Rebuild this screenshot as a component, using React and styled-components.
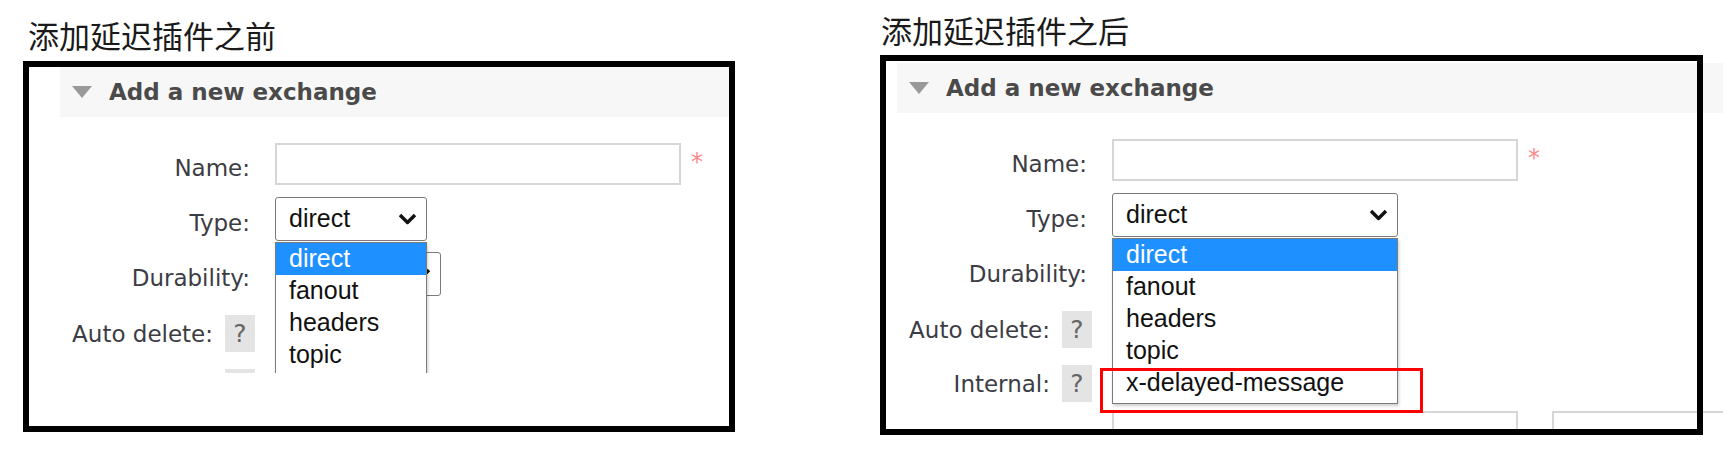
import React from 'react';
import styled, { createGlobalStyle } from 'styled-components';

const GlobalStyle = createGlobalStyle`
  html, body {
    margin: 0;
    padding: 0;
    background: #fff;
  }
  body {
    font-family: "DejaVu Sans", Verdana, sans-serif;
  }
`;

const Page = styled.div`
  display: flex;
  align-items: flex-start;
  gap: 145px;
  width: 1736px;
  height: 451px;
  padding-left: 23px;
  box-sizing: border-box;
  overflow: hidden;
`;

const Panel = styled.section`
  display: flex;
  flex-direction: column;
  padding-top: ${({ $top }) => $top}px;
`;

const Title = styled.h2`
  margin: 0 0 ${({ $gap }) => $gap}px ${({ $indent }) => $indent}px;
  font-family: "Noto Sans CJK SC", sans-serif;
  font-weight: 400;
  font-size: 31px;
  line-height: 36px;
  color: #1a1a1a;
`;

// the black frame is drawn over the pasted screenshot, so it sits in ::after
const Frame = styled.div`
  position: relative;
  width: ${({ $w }) => $w}px;
  height: ${({ $h }) => $h}px;
  padding: 6px;
  box-sizing: border-box;

  &::after {
    content: '';
    position: absolute;
    inset: 0;
    border: 6px solid #000;
    pointer-events: none;
    z-index: 5;
  }
`;

const Shot = styled.div`
  position: relative;
  margin: ${({ $y }) => $y}px 0 0 ${({ $x }) => $x}px;
  width: ${({ $w }) => $w}px;
  height: ${({ $h }) => $h}px;
  overflow: hidden;
  background: #fff;
  color: #3c3c44;
`;

const SectionHeader = styled.div`
  display: flex;
  align-items: center;
  gap: 17px;
  height: 50px;
  padding-left: 12px;
  background: #f7f7f7;
  font-weight: 700;
  font-size: 23px;
  color: #4a4a4a;
`;

const Caret = styled.span`
  width: 0;
  height: 0;
  border-left: 10.5px solid transparent;
  border-right: 10.5px solid transparent;
  border-top: 12px solid #999;
`;

const Form = styled.div`
  padding-top: 19px;
`;

const Row = styled.div`
  display: grid;
  grid-template-columns: 195px auto;
  column-gap: 20px;
  align-items: center;
  height: ${({ $h }) => $h}px;
`;

const Label = styled.div`
  display: flex;
  justify-content: flex-end;
  align-items: center;
  gap: 12px;
  padding-right: ${({ $help }) => ($help ? 0 : 5)}px;
  padding-top: ${({ $help }) => ($help ? 0 : 8)}px;
  font-size: 23px;
  color: #3c3c44;
  white-space: nowrap;
`;

const Help = styled.span`
  display: flex;
  align-items: center;
  justify-content: center;
  width: 30px;
  height: 37px;
  background: #e4e4e4;
  color: #666;
  font-size: 25px;
`;

const Field = styled.div`
  display: flex;
  align-items: center;
  gap: 10px;
`;

const TextInput = styled.div`
  width: 406px;
  height: 42px;
  flex: none;
  box-sizing: border-box;
  border: 2px solid #d6d6d6;
  background: #fff;
`;

const Required = styled.span`
  align-self: flex-start;
  margin-top: 7px;
  color: #ff8a8a;
  font-size: 24px;
  line-height: 24px;
`;

const Equals = styled.span`
  width: 14px;
  flex: none;
  margin-top: 14px;
  text-align: center;
  font-size: 24px;
  font-weight: 700;
  color: #222;
`;

const SelectWrap = styled.div`
  position: relative;
  width: ${({ $w }) => $w}px;
  z-index: ${({ $open }) => ($open ? 3 : 1)};
`;

const SelectBox = styled.div`
  display: flex;
  align-items: center;
  justify-content: space-between;
  height: 44px;
  padding: 0 9px 0 13px;
  box-sizing: border-box;
  border: 1.5px solid #7a7a7a;
  border-radius: 3px;
  background: #fff;
  font-family: "Liberation Sans", Arial, sans-serif;
  font-size: 25px;
  color: #111;
`;

const OptionList = styled.ul`
  position: absolute;
  top: calc(100% + 1px);
  left: 0;
  right: 0;
  margin: 0;
  padding: 0 0 4px;
  list-style: none;
  border: 1.5px solid #7a7a7a;
  background: #fff;
  box-shadow: 1px 2px 3px rgba(0, 0, 0, 0.2);
`;

const Option = styled.li`
  height: 32px;
  line-height: 31px;
  padding-left: 13px;
  font-family: "Liberation Sans", Arial, sans-serif;
  font-size: 25px;
  background: ${({ $active }) => ($active ? '#1e90ff' : 'transparent')};
  color: ${({ $active }) => ($active ? '#fff' : '#111')};
`;

const Marker = styled.div`
  position: absolute;
  left: 203px;
  top: 305px;
  width: 323px;
  height: 45px;
  box-sizing: border-box;
  border: 3px solid #f00;
  z-index: 4;
`;

const Chevron = () => (
  <svg width="19" height="12" viewBox="0 0 19 12">
    <polyline points="2,2 9.5,9.5 17,2" fill="none" stroke="#111" strokeWidth="3.4" strokeLinejoin="round" />
  </svg>
);

const Select = ({ width, value, options, open }) => (
  <SelectWrap $w={width} $open={open}>
    <SelectBox>
      <span>{value}</span>
      <Chevron />
    </SelectBox>
    {open && (
      <OptionList>
        {options.map((opt, i) => (
          <Option key={opt} $active={i === 0}>{opt}</Option>
        ))}
      </OptionList>
    )}
  </SelectWrap>
);

const baseTypes = ['direct', 'fanout', 'headers', 'topic'];

const panels = [
  {
    title: '添加延迟插件之前',
    top: 17,
    gap: 8,
    indent: 5,
    frame: { w: 712, h: 371 },
    shot: { x: 31, y: 0, w: 669, h: 306 },
    typeWidth: 152,
    types: baseTypes,
    marked: false,
  },
  {
    title: '添加延迟插件之后',
    top: 12,
    gap: 7,
    indent: 1,
    frame: { w: 823, h: 380 },
    shot: { x: 11, y: 2, w: 826, h: 372 },
    typeWidth: 286,
    types: [...baseTypes, 'x-delayed-message'],
    marked: true,
  },
];

const ExchangeForm = ({ panel }) => (
  <Panel $top={panel.top}>
    <Title $gap={panel.gap} $indent={panel.indent}>{panel.title}</Title>
    <Frame $w={panel.frame.w} $h={panel.frame.h}>
      <Shot $x={panel.shot.x} $y={panel.shot.y} $w={panel.shot.w} $h={panel.shot.h}>
        <SectionHeader>
          <Caret />
          Add a new exchange
        </SectionHeader>
        <Form>
          <Row $h={55}>
            <Label>Name:</Label>
            <Field>
              <TextInput />
              <Required>*</Required>
            </Field>
          </Row>
          <Row $h={55}>
            <Label>Type:</Label>
            <Field>
              <Select width={panel.typeWidth} value="direct" options={panel.types} open />
            </Field>
          </Row>
          <Row $h={55}>
            <Label>Durability:</Label>
            <Field>
              <Select width={166} value="Durable" />
            </Field>
          </Row>
          <Row $h={65}>
            <Label $help>
              Auto delete:
              <Help>?</Help>
            </Label>
            <Field />
          </Row>
          <Row $h={43}>
            <Label $help>
              Internal:
              <Help>?</Help>
            </Label>
            <Field />
          </Row>
          <Row $h={54}>
            <Label />
            <Field>
              <TextInput />
              <Equals>=</Equals>
              <TextInput />
            </Field>
          </Row>
        </Form>
        {panel.marked && <Marker />}
      </Shot>
    </Frame>
  </Panel>
);

const App = () => (
  <>
    <GlobalStyle />
    <Page>
      {panels.map((panel) => (
        <ExchangeForm key={panel.title} panel={panel} />
      ))}
    </Page>
  </>
);

export default App;
